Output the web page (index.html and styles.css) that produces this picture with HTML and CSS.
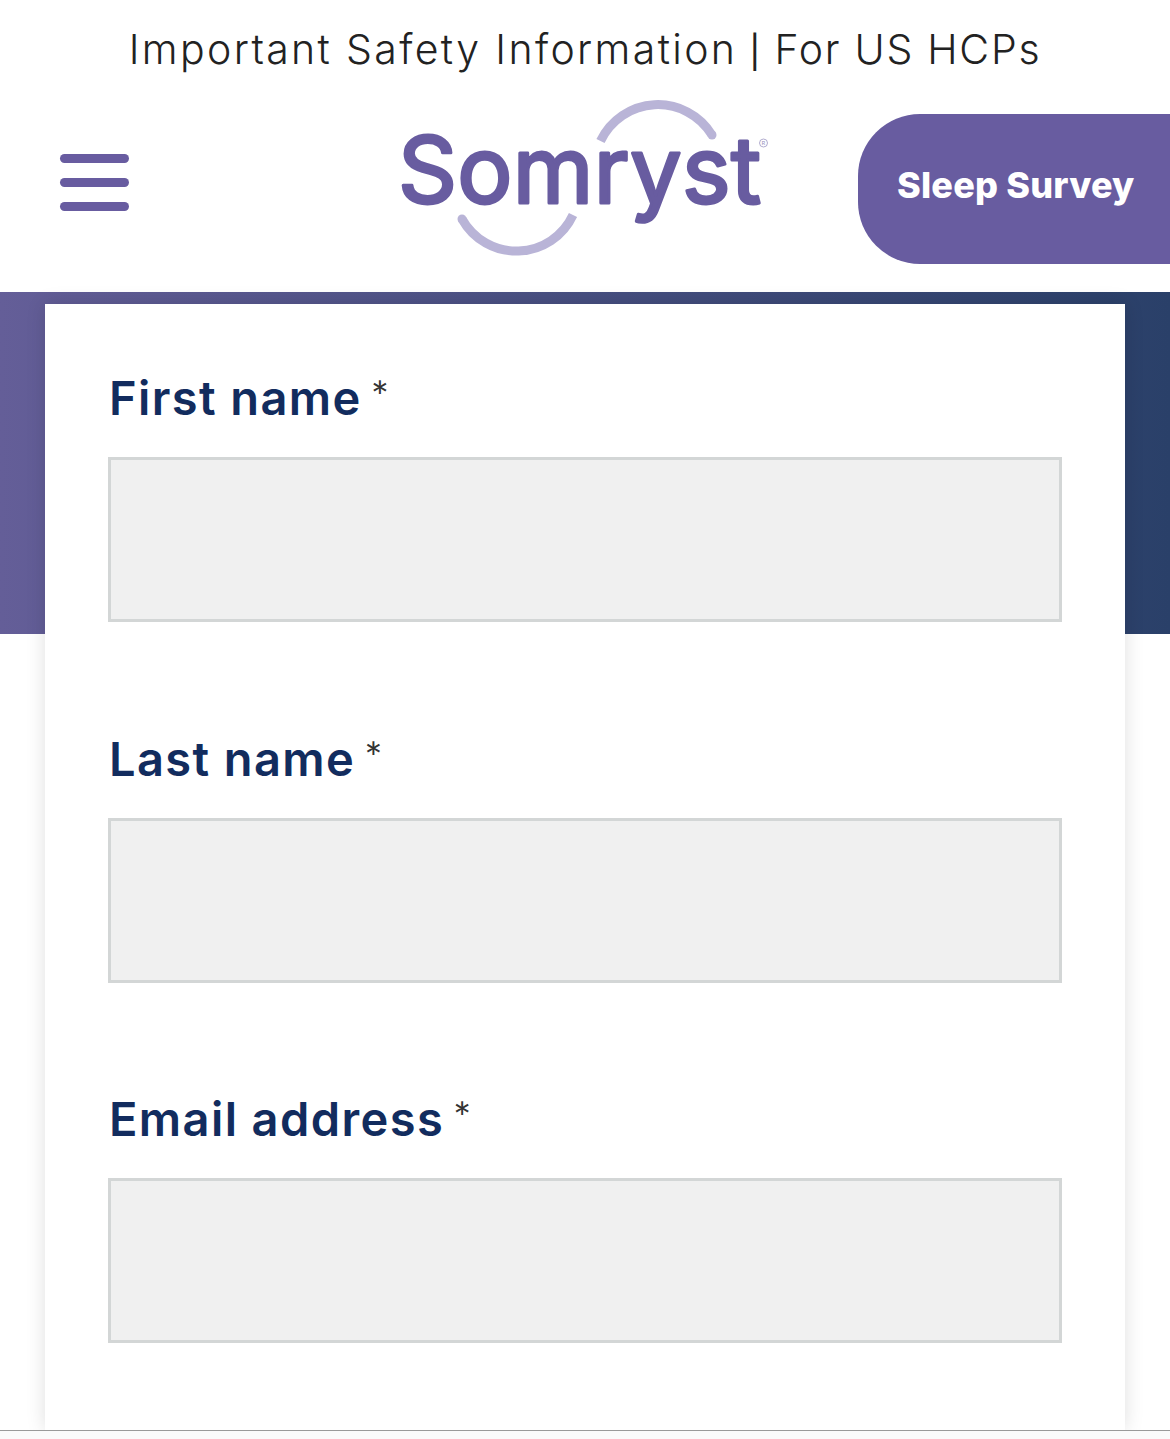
FILE: index.html
```html
<!DOCTYPE html>
<html lang="en">
<head>
<meta charset="utf-8">
<title>Somryst</title>
<link rel="stylesheet" href="styles.css">
</head>
<body>
<div class="notice">Important Safety Information <span class="sep">|</span> <span class="notice-end">For US HCPs</span></div>
<header class="site-header">
  <button class="menu" type="button" aria-label="Menu"><span></span><span></span><span></span></button>
  <svg class="logo" viewBox="392 100 380 160" role="img" aria-label="Somryst">
    <path class="arc" d="M600.5 141 A63.4 63.4 0 0 1 712 135"/>
    <circle class="arc-end" cx="712" cy="135" r="4.5"/>
    <path class="arc" d="M462 219 A62.3 62.3 0 0 0 573 215"/>
    <circle class="arc-end" cx="462" cy="219" r="4.5"/>
    <text class="logo-word" x="398" y="203" textLength="363" lengthAdjust="spacing">Somryst</text>
    <circle class="reg" cx="763.5" cy="143" r="4"/>
    <text class="reg-r" x="763.5" y="145.2" text-anchor="middle">R</text>
  </svg>
  <a class="survey" href="#">Sleep Survey</a>
</header>
<main class="hero">
  <form class="card">
    <div class="field">
      <label class="label" for="first">First name<span class="req">*</span></label>
      <input class="input" id="first" type="text">
    </div>
    <div class="field">
      <label class="label" for="last">Last name<span class="req">*</span></label>
      <input class="input" id="last" type="text">
    </div>
    <div class="field">
      <label class="label" for="email">Email address<span class="req">*</span></label>
      <input class="input" id="email" type="email">
    </div>
  </form>
</main>
<div class="bottom-bar"></div>
</body>
</html>
```
FILE: styles.css
```css
* { box-sizing: border-box; }
html, body { margin: 0; padding: 0; }
body {
  width: 1170px;
  height: 1439px;
  overflow: hidden;
  background: #fff;
  font-family: "Inter", "Liberation Sans", sans-serif;
  display: flex;
  flex-direction: column;
}
.notice {
  height: 100px;
  line-height: 98px;
  text-align: center;
  font-size: 41px;
  font-weight: 300;
  letter-spacing: 2.36px;
  color: #222;
  flex: none;
}
.notice-end { letter-spacing: 1.73px; }
.sep {
  font-family: "Lato", sans-serif;
  font-size: 40px;
  font-weight: 400;
  margin: 0 -1.5px;
}
.site-header {
  height: 192px;
  flex: none;
  display: flex;
  align-items: flex-start;
  padding-left: 60px;
}
.menu {
  margin: 54px 0 0;
  padding: 0;
  width: 69px;
  border: 0;
  background: none;
  display: flex;
  flex-direction: column;
  gap: 15px;
}
.menu span {
  display: block;
  height: 9px;
  border-radius: 4.5px;
  background: #685ca0;
}
.logo {
  margin-left: 263px;
  width: 380px;
  height: 160px;
  flex: none;
}
.arc {
  fill: none;
  stroke: #b9b4d7;
  stroke-width: 9;
}
.arc-end { fill: #b9b4d7; }
.logo-word {
  font-family: "Inter", sans-serif;
  font-size: 92px;
  font-weight: 400;
  fill: #685ca0;
  stroke: #685ca0;
  stroke-width: 3;
  stroke-linejoin: round;
}
.reg { fill: none; stroke: #9d97c2; stroke-width: 0.8; }
.reg-r { font-family: "Lato", sans-serif; font-size: 6px; fill: #9d97c2; }
.survey {
  margin: 14px 0 0 auto;
  width: 312px;
  height: 150px;
  padding: 0 0 8px 39px;
  display: flex;
  align-items: center;
  background: #685ca0;
  border-radius: 62px 0 0 62px;
  color: #fff;
  font-family: "Inter", sans-serif;
  font-size: 36px;
  font-weight: 800;
  letter-spacing: 0.2px;
  text-decoration: none;
}
.hero {
  flex: 1;
  padding: 12px 45px 0;
  background: linear-gradient(90deg, #645e98 0%, #2a4069 100%) no-repeat;
  background-size: 100% 342px;
  min-height: 0;
}
.card {
  height: 100%;
  background: #fff;
  box-shadow: 0 0 18px rgba(0, 0, 0, 0.13);
  padding: 60px 63px 0;
  display: flex;
  flex-direction: column;
  gap: 102.5px;
}
.label {
  display: block;
  height: 60px;
  line-height: 68px;
  margin-bottom: 33px;
  padding-left: 1px;
  font-family: "Inter", sans-serif;
  font-size: 47px;
  font-weight: 600;
  letter-spacing: 1.4px;
  color: #122c5e;
  white-space: nowrap;
}
.req {
  margin-left: 9px;
  font-family: "Lato", sans-serif;
  font-size: 43px;
  font-weight: 400;
  color: #333;
  vertical-align: 3px;
  line-height: 0;
}
.input {
  display: block;
  width: 954px;
  height: 165px;
  margin: 0;
  border: 3px solid #d3d6d6;
  background: #f0f0f0;
  border-radius: 0;
  outline: 0;
}
.bottom-bar {
  flex: none;
  height: 9px;
  background: #fafafa;
  border-top: 1px solid #999;
}
```
